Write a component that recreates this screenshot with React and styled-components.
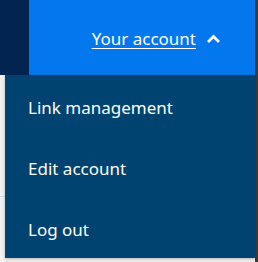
import React, { useState } from "react";
import styled, { createGlobalStyle } from "styled-components";

const GlobalStyle = createGlobalStyle`
  * { box-sizing: border-box; }
  body {
    margin: 0;
    background: #f1f1f1;
    font-family: "Noto Sans", "Open Sans", sans-serif;
    overflow: hidden;
  }
`;

const Page = styled.div`
  display: flex;
  height: 262px;
`;

const Main = styled.div`
  flex: 1;
  position: relative;
  display: flex;
  flex-direction: column;
`;

const Header = styled.header`
  display: flex;
  height: 75px;
`;

const Brand = styled.div`
  width: 29px;
  background: #012451;
`;

const AccountBar = styled.nav`
  flex: 1;
  background: #0277ee;
  display: flex;
  align-items: center;
  justify-content: flex-end;
  padding: 2px 34px 0 0;
  gap: 10px;
`;

const AccountLink = styled.a`
  color: #fff;
  font-size: 17px;
  text-decoration: underline;
  text-underline-offset: 3px;
  text-decoration-thickness: 1px;
  cursor: pointer;
`;

const Body = styled.div`
  flex: 1;
  border-bottom: 1px solid #c9dbe9;
  margin-bottom: 65px;
`;

const Menu = styled.ul`
  position: absolute;
  top: 75px;
  left: 5px;
  right: 0;
  height: 183px;
  margin: 0;
  padding: 2px 0 0;
  list-style: none;
  background: #014370;
  box-shadow: 0 1px 3px rgba(0, 0, 0, 0.25);
`;

const MenuItem = styled.li`
  height: 61px;
  display: flex;
  align-items: center;
  padding-left: 23px;
  color: #fff;
  font-size: 17px;
`;

const Scrollbar = styled.div`
  width: 3px;
  background: #3a3a3a;
`;

function Chevron() {
  return (
    <svg width="15" height="14" viewBox="0 0 15 14">
      <path d="M2 10 L7.5 4.5 L13 10" fill="none" stroke="#fff" strokeWidth="2.8" />
    </svg>
  );
}

export default function App() {
  const [open] = useState(true);
  return (
    <Page>
      <GlobalStyle />
      <Main>
        <Header>
          <Brand />
          <AccountBar>
            <AccountLink>Your account</AccountLink>
            <Chevron />
          </AccountBar>
        </Header>
        <Body />
        {open && (
          <Menu>
            <MenuItem>Link management</MenuItem>
            <MenuItem>Edit account</MenuItem>
            <MenuItem>Log out</MenuItem>
          </Menu>
        )}
      </Main>
      <Scrollbar />
    </Page>
  );
}
